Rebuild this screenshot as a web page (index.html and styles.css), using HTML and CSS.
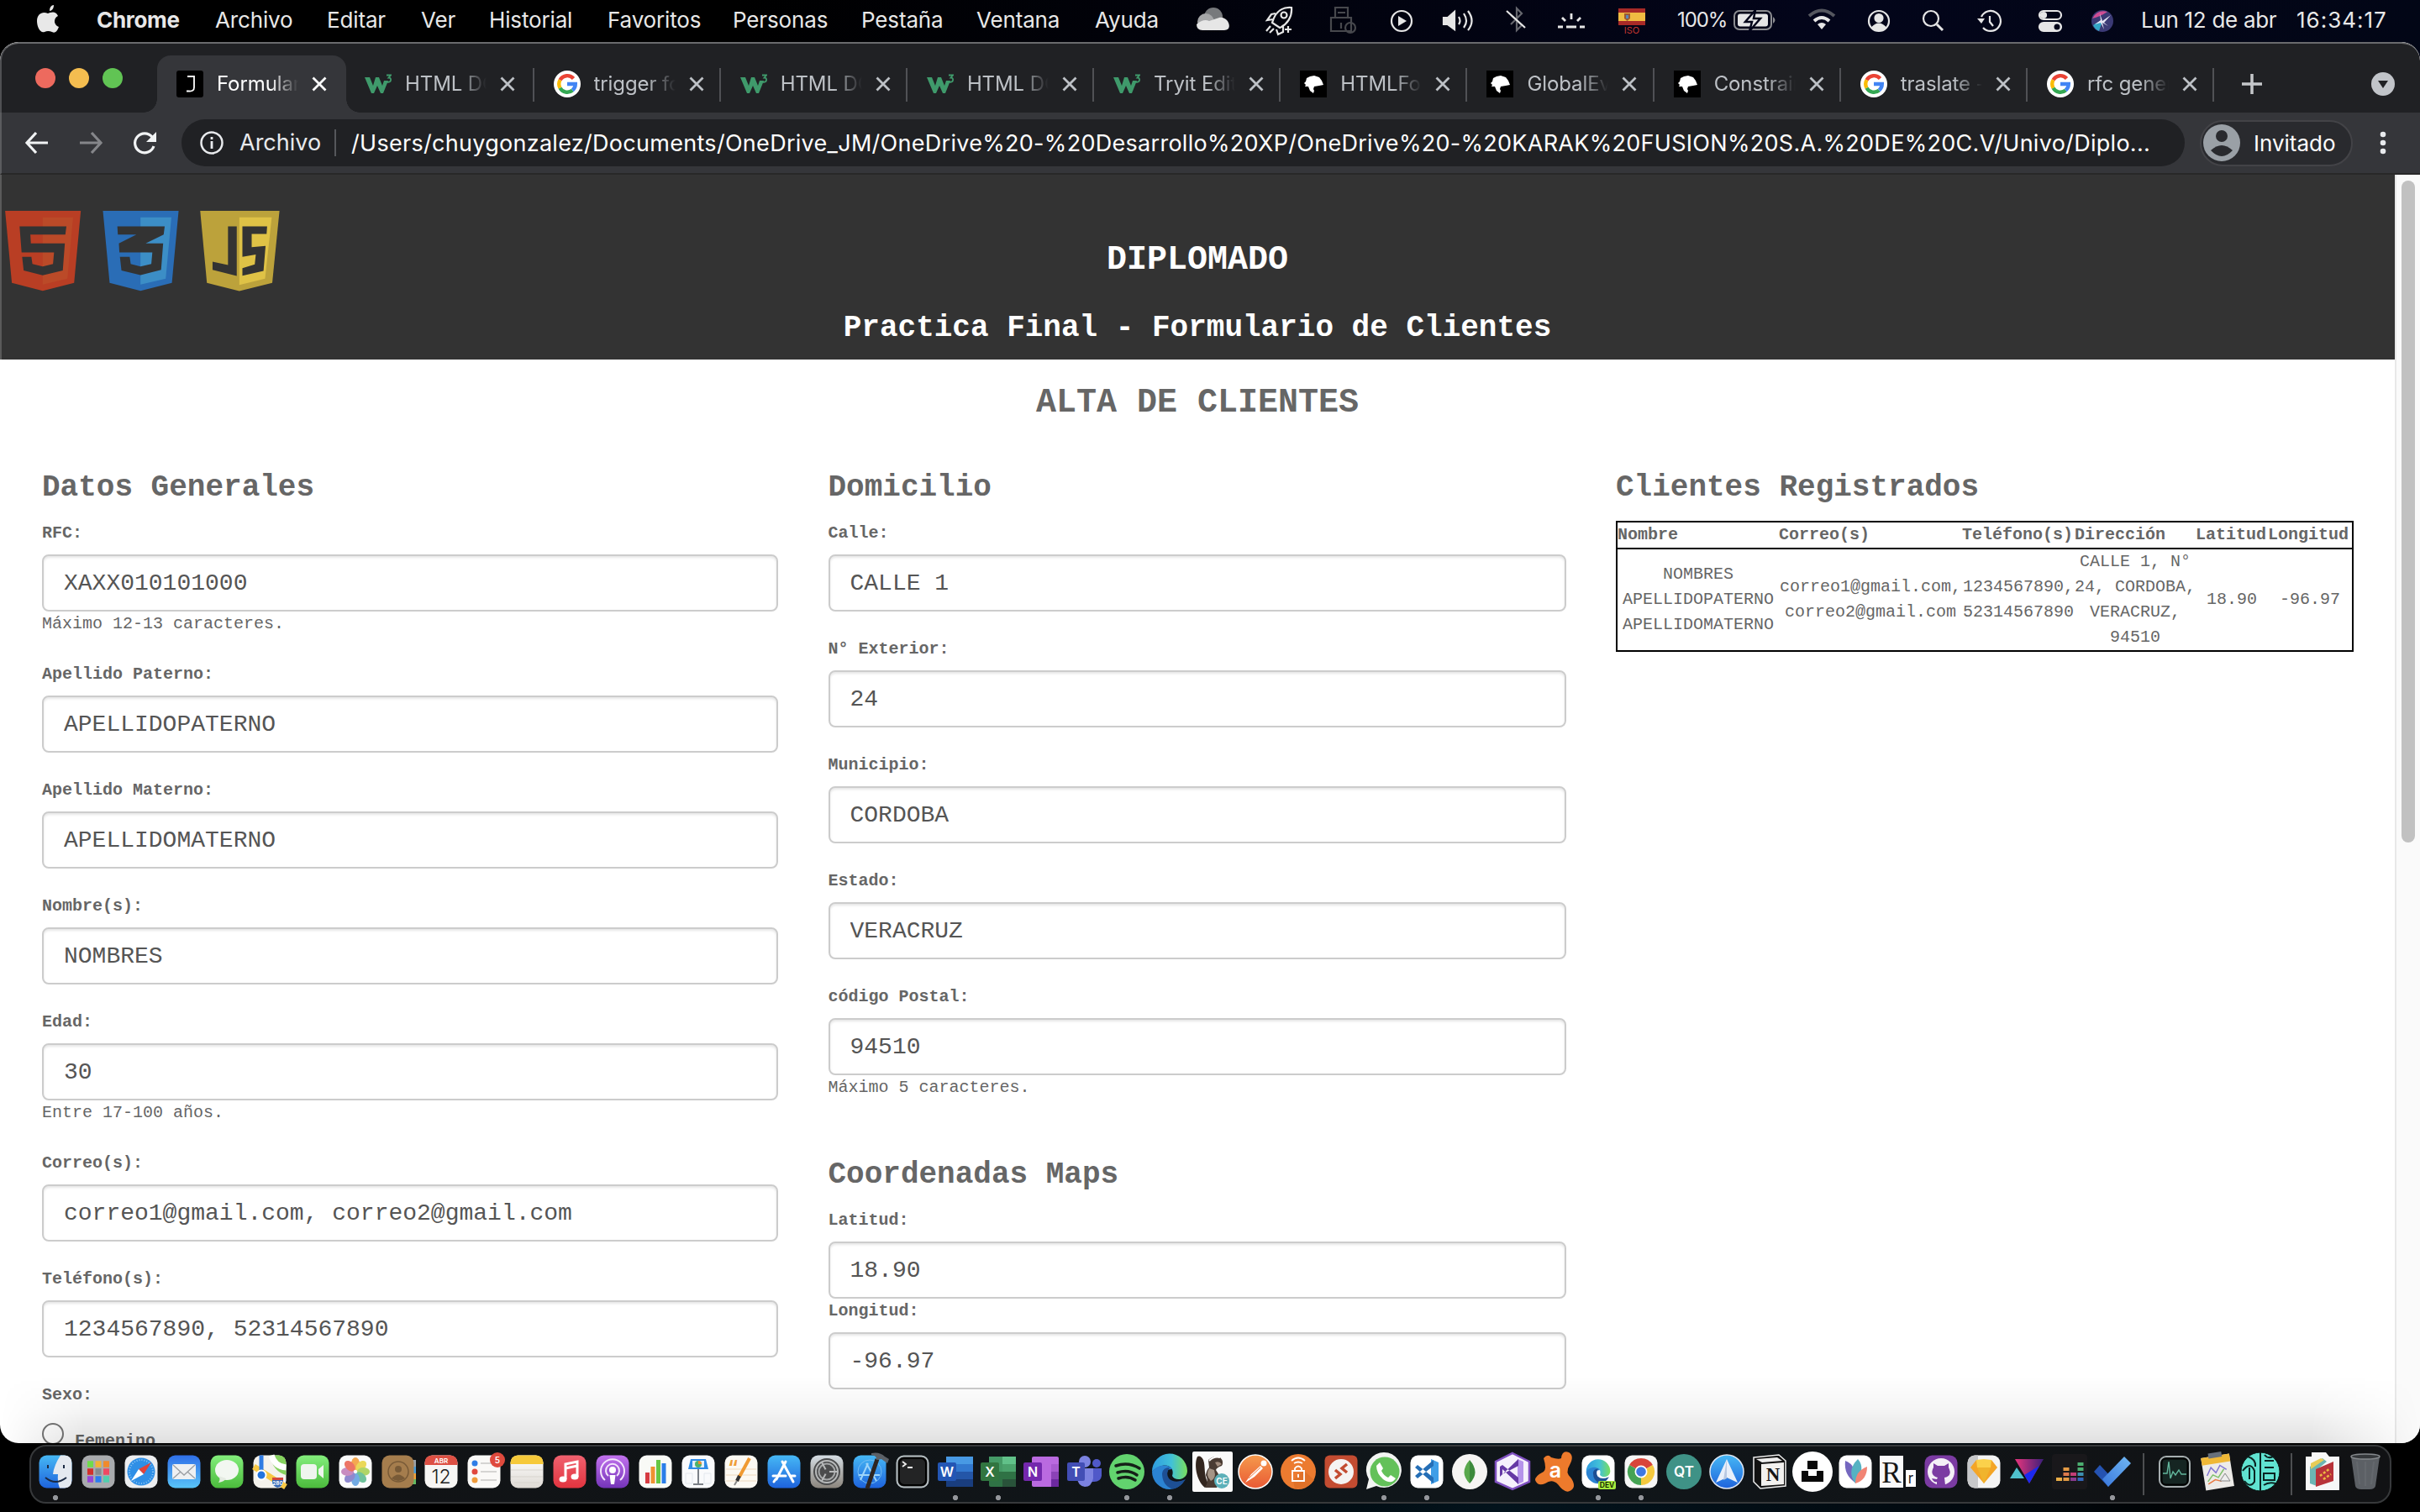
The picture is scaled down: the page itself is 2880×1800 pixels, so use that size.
FILE: index.html
```html
<!DOCTYPE html>
<html lang="es">
<head>
<meta charset="utf-8">
<title>Formulario de Clientes</title>
<link rel="stylesheet" href="styles.css">
</head>
<body>
<svg class="defs" width="0" height="0">
  <defs>
    <symbol id="close" viewBox="0 0 18 18"><path d="M1.500 1.500L16.500 16.500M16.500 1.500L1.500 16.500" stroke="currentColor" stroke-width="2.800" fill="none"/></symbol>
    <symbol id="w3" viewBox="0 0 32 32"><path d="M0 8h6l4 10 3-10h4l4 10 2-6h5l-6 15h-3l-4-9-4 9H8z" fill="#3f9a6b"/><path d="M26 5.500h5l-2.500 3q3 0 2.500 3t-5 2" fill="none" stroke="#3f9a6b" stroke-width="1.800"/></symbol>
    <symbol id="google" viewBox="0 0 32 32"><circle cx="16" cy="16" r="16" fill="#fff"/><g fill="none" stroke-width="4.400"><path d="M23.500 9.500A9.800 9.800 0 0 0 7.500 11.300" stroke="#ea4335"/><path d="M7.500 11.300a9.800 9.800 0 0 0 0 9.400" stroke="#fbbc05"/><path d="M7.500 20.700a9.800 9.800 0 0 0 14.800 2.800" stroke="#34a853"/><path d="M22.300 23.500A9.800 9.800 0 0 0 25.800 16H16" stroke="#4285f4"/></g></symbol>
    <symbol id="mdn" viewBox="0 0 32 32"><path d="M0 0h32v32H0z" fill="#000"/><path d="M8 9l4-2 5-1 6 2 3 4 2 5-5 1-6 1-1 3 1 2-1 3-4-3-2-5-4 0 1-2-2-2 2-2z" fill="#fff"/></symbol>
    <linearGradient id="blue" x2="0" y2="1"><stop stop-color="#46b8f5"/><stop offset="1" stop-color="#1e63dc"/></linearGradient>
    <linearGradient id="mailg" x2="0" y2="1"><stop stop-color="#2f6fe8"/><stop offset="1" stop-color="#59c4f8"/></linearGradient>
    <linearGradient id="green" x2="0" y2="1"><stop stop-color="#83ee7c"/><stop offset="1" stop-color="#4bbb3c"/></linearGradient>
    <linearGradient id="red" x2="0" y2="1"><stop stop-color="#f0616f"/><stop offset="1" stop-color="#e2343f"/></linearGradient>
    <linearGradient id="purple" x2="0" y2="1"><stop stop-color="#c272ee"/><stop offset="1" stop-color="#7434b8"/></linearGradient>
    <linearGradient id="orange" x2="0" y2="1"><stop stop-color="#f59a4c"/><stop offset="1" stop-color="#ea5a35"/></linearGradient>
    <linearGradient id="silver" x2="0" y2="1"><stop stop-color="#d5dde3"/><stop offset="1" stop-color="#8b857d"/></linearGradient>
    <linearGradient id="paper" x2="0" y2="1"><stop stop-color="#fff"/><stop offset="1" stop-color="#dedad4"/></linearGradient>
    <linearGradient id="edgeg"><stop stop-color="#2e9be0"/><stop offset=".55" stop-color="#41c1d8"/><stop offset="1" stop-color="#79df5c"/></linearGradient>
    <linearGradient id="tri"><stop stop-color="#e8357c"/><stop offset="1" stop-color="#3b1f7a"/></linearGradient>
    <linearGradient id="todo" x1="0" y1="1" x2="1" y2="0"><stop stop-color="#3a78dc"/><stop offset="1" stop-color="#70b8f4"/></linearGradient>
    <symbol id="edge" viewBox="-22 -22 44 44"><path d="M-21 0A21 21 0 0 1 21 -1C21 10 6 12 3 5C7 -6 -6 -14 -21 0Z" fill="url(#edgeg)"/><path d="M-21 0C-14-10 0-9 3-3Q-7-3-5 6Q-1 17 18 10Q11 21 0 21A21 21 0 0 1-21 0Z" fill="#2b83d2"/><path d="M-9 2Q-8-5 0-5Q-5 2-1 8Q6 15 19 9Q12 20 3 20.500Q-9 16-9 2Z" fill="#1d4f94"/></symbol>
  </defs>
</svg>

<header class="menubar">
  <svg class="ico" viewBox="-22 -25 44 50"><path d="M2-12C2-16 4-19 7-19C7-15 5-12 2-12ZM0-9C3-10 9-13 12-6C6-3 7 5 13 7C10 15 7 14 5 13Q0 11-4 13C-9 15-13 7-13 0C-13-9-6-12 0-9Z" fill="#e8e8e8"/></svg>
  <span class="app">Chrome</span><span>Archivo</span><span>Editar</span><span>Ver</span><span>Historial</span><span>Favoritos</span><span>Personas</span><span>Pestaña</span><span>Ventana</span><span>Ayuda</span>
  <svg class="ico" viewBox="-22 -25 44 50"><circle cy="-5" r="11" fill="#77797c"/><circle cx="-9" cy="1" r="10" fill="#a5a6a8"/><path d="M-20 4Q-12-3-5 0L7-4C18-6 24 11 13 11H-13Q-20 11-20 4Z" fill="#e6e6e6"/></svg>
  <svg class="ico line" viewBox="-22 -25 44 50"><path d="M-9 2C-5-12 4-17 14-16C15-5 9 4 0 8ZM-8-2l-7 1 5-7 5-1M4 6l0 7-6 3-2-6M-11 6l-5 6M-7 9l-5 5M-2 12M6 10h8M10 6v8"/><circle cx="5" cy="-7" r="3.500"/></svg>
  <svg class="ico line dim" viewBox="-22 -25 44 50"><path d="M-9-16H6V-4H-9zM-14-4H10V12H-14zM-6-10H3M-2 2v7"/><circle cx="9" cy="8" r="6"/></svg>
  <svg class="ico line" viewBox="-22 -25 44 50"><circle r="12"/><path d="M-4-6L6 0L-4 6Z" fill="#e6e6e6" stroke="none"/></svg>
  <svg class="ico line" viewBox="-22 -25 44 50"><path d="M-18-4h5l8-7V10l-8-6h-5z" fill="#e6e6e6"/><path d="M0-5q3 5 0 9M6-9q6 9 0 17M11-12q9 12 0 23"/></svg>
  <svg class="ico line" viewBox="-22 -25 44 50"><path class="faint" d="M-6-7L7 5L1 11V-15L7-9L-6 4"/><path d="M-11-12L11 8"/></svg>
  <svg class="ico line" viewBox="-22 -25 44 50"><path stroke-width="2.800" d="M-16 7h6M-6 7h12M10 7h6M0-2v-7M-7 0l-4-4M7 0l4-4"/></svg>
  <svg class="ico" viewBox="-22 -25 44 50"><path d="M-16-15H16V5H-16z" fill="#a82a27"/><path d="M-16-10H16V0H-16z" fill="#f0bc42"/><path d="M-9-9h7v6l-3.500 3L-9-3z" fill="#9c5a33"/><path d="M-7-7h3v4h-3z" fill="#5c86b8"/><text x="0" y="15" class="iso">ISO</text></svg>
  <span class="pct">100%</span>
  <svg class="ico batt" viewBox="-28 -25 56 50"><rect x="-24" y="-12" width="44" height="22" rx="6" fill="none" stroke="#8b8c90" stroke-width="2"/><path d="M22-5q5 4 0 8z" fill="#8b8c90"/><rect x="-20" y="-8.500" width="36" height="15" rx="3" fill="#e6e6e6"/><path d="M1-13L-11 1H-3L-6 12L7-3H-1Z" fill="#e6e6e6" stroke="#03051a" stroke-width="2.500"/></svg>
  <svg class="ico" viewBox="-22 -25 44 50"><path d="M-15-6Q0-19 15-6" fill="none" stroke="#55575f" stroke-width="4"/><path d="M-9 0Q0-8 9 0" fill="none" stroke="#e6e6e6" stroke-width="4"/><path d="M-5 4Q0 0 5 4L0 10Z" fill="#e6e6e6"/></svg>
  <svg class="ico line" viewBox="-22 -25 44 50"><circle r="12"/><circle cy="-3.500" r="4.500" fill="#e6e6e6"/><path d="M-8 8Q0-1 8 8Q0 14-8 8" fill="#e6e6e6"/></svg>
  <svg class="ico line" viewBox="-22 -25 44 50"><circle cx="-2" cy="-3" r="9"/><path d="M5 4l7 7" stroke-width="3"/></svg>
  <svg class="ico line" viewBox="-22 -25 44 50"><path d="M-10-5A12 12 0 1 1-8 8M0-6v7l4 5"/><path d="M-15-3h9l-4 6z" fill="#e6e6e6" stroke="none"/></svg>
  <svg class="ico line" viewBox="-22 -25 44 50"><rect x="-13" y="-12" width="26" height="10" rx="5"/><circle cx="-8" cy="-7" r="3" fill="#e6e6e6"/><rect x="-13" y="2" width="26" height="10" rx="5" fill="#e6e6e6"/><circle cx="8" cy="7" r="3.500" fill="#03051a" stroke="none"/></svg>
  <svg class="ico" viewBox="-22 -25 44 50"><circle r="13" fill="#3b3a75"/><path d="M-12-3Q-6-14 6-11Q-3-5-12-3Z" fill="#cf4d93"/><path d="M-11 5Q-4 0 0 0L-4 12Q-9 10-11 5Z" fill="#33a6c5"/><path d="M0 0L10-7L2 2L7 6L0 2L2 10L-2 2L-9 4L-2-1L-3-9Z" fill="#e7e6f5"/></svg>
  <span class="date">Lun 12 de abr</span><span class="clock">16:34:17</span>
</header>

<div class="window">
  <div class="tabstrip">
    <div class="lights"><i class="l-red"></i><i class="l-yellow"></i><i class="l-green"></i></div>
    <div class="tab active"><svg class="fav" viewBox="0 0 32 32"><rect width="32" height="32" rx="3"/><path d="M13 7h8v13q0 5-6 4.500h-3" stroke="#fff" stroke-width="1.800" fill="none"/></svg><span>Formulario</span><svg class="x"><use href="#close"/></svg></div>
    <div class="tab nosep"><svg class="fav"><use href="#w3"/></svg><span>HTML DOM</span><svg class="x"><use href="#close"/></svg></div>
    <div class="tab"><svg class="fav"><use href="#google"/></svg><span>trigger form</span><svg class="x"><use href="#close"/></svg></div>
    <div class="tab"><svg class="fav"><use href="#w3"/></svg><span>HTML DOM</span><svg class="x"><use href="#close"/></svg></div>
    <div class="tab"><svg class="fav"><use href="#w3"/></svg><span>HTML DOM</span><svg class="x"><use href="#close"/></svg></div>
    <div class="tab"><svg class="fav"><use href="#w3"/></svg><span>Tryit Editor</span><svg class="x"><use href="#close"/></svg></div>
    <div class="tab"><svg class="fav"><use href="#mdn"/></svg><span>HTMLForm</span><svg class="x"><use href="#close"/></svg></div>
    <div class="tab"><svg class="fav"><use href="#mdn"/></svg><span>GlobalEvent</span><svg class="x"><use href="#close"/></svg></div>
    <div class="tab"><svg class="fav"><use href="#mdn"/></svg><span>Constraint</span><svg class="x"><use href="#close"/></svg></div>
    <div class="tab"><svg class="fav"><use href="#google"/></svg><span>traslate - G</span><svg class="x"><use href="#close"/></svg></div>
    <div class="tab"><svg class="fav"><use href="#google"/></svg><span>rfc generator</span><svg class="x"><use href="#close"/></svg></div>
    <svg class="plus" viewBox="0 0 24 24"><path d="M12 0v24M0 12h24" stroke="#c5c7ca" stroke-width="3.500"/></svg>
    <svg class="more" viewBox="0 0 28 28"><circle cx="14" cy="14" r="14" fill="#c1c4c9"/><path d="M8 10h12l-6 9z" fill="#202124"/></svg>
  </div>
  <div class="toolbar">
    <svg class="nav" viewBox="-32 -32 64 64"><path d="M13 0H-11M-1-12L-12 0L-1 12" stroke="#f1f3f4" stroke-width="3.200" fill="none"/></svg>
    <svg class="nav" viewBox="-32 -32 64 64"><path d="M-13 0H11M1-12L12 0L1 12" stroke="#85868a" stroke-width="3.200" fill="none"/></svg>
    <svg class="nav" viewBox="-32 -32 64 64"><path d="M9-7A11.500 11.500 0 1 0 11 4" stroke="#f1f3f4" stroke-width="3.200" fill="none"/><path d="M14-13V-1H2Z" fill="#f1f3f4"/></svg>
    <div class="omnibox">
      <svg class="info" viewBox="-14 -14 28 28"><circle r="12.500" fill="none" stroke="#e8eaed" stroke-width="2.500"/><path d="M0-7v3M0-2v9" stroke="#e8eaed" stroke-width="2.800"/></svg>
      <span class="scheme">Archivo</span><span class="url">/Users/chuygonzalez/Documents/OneDrive_JM/OneDrive%20-%20Desarrollo%20XP/OneDrive%20-%20KARAK%20FUSION%20S.A.%20DE%20C.V/Univo/Diplo...</span>
    </div>
    <div class="profile"><svg viewBox="-22 -22 44 44"><circle r="22" fill="#9aa0a6"/><circle cy="-8" r="7" fill="#292a2e"/><path d="M-13 9Q0-3 13 9Q0 23-13 9" fill="#292a2e"/></svg><span>Invitado</span></div>
    <svg class="kebab" viewBox="0 0 8 28"><g fill="#e8eaed"><circle cx="4" cy="4" r="3.300"/><circle cx="4" cy="14" r="3.300"/><circle cx="4" cy="24" r="3.300"/></g></svg>
  </div>

  <div class="viewport">
    <main class="page">
      <section class="banner">
        <svg class="logos" viewBox="0 90 560 250" preserveAspectRatio="none">
          <path d="M10 100H157L144 310L83 333L23 310Z" fill="#b93e24"/><path d="M83 119H142L131 298L83 315Z" fill="#bb4a28"/>
          <path d="M38 145H129L127 169H59L60 195H126L122 274L83 288L46 274L43 234H61L63 255L83 262L103 255L105 221H42Z" fill="#333"/>
          <path d="M200 100H347L334 310L273 333L213 310Z" fill="#2a6db6"/><path d="M273 119H333L322 298L273 315Z" fill="#3c8ec6"/>
          <path d="M228 145H320L318 169L283 195H317L313 272L273 287L236 274L233 234H252L254 255L273 262L294 255L296 221H232L231 195L265 169H229Z" fill="#333"/>
          <path d="M389 100H543L529 310L465 334L402 310Z" fill="#bca23b"/><path d="M465 119H528L515 298L465 316Z" fill="#dfc246"/>
          <path d="M443 145H460V290L413 272V248L443 258ZM471 145H519L518 167H489V206L516 202L512 275L471 289V267L495 256L497 227L471 234Z" fill="#333"/>
        </svg>
        <div class="banner-text"><h1>DIPLOMADO</h1><h2>Practica Final - Formulario de Clientes</h2></div>
      </section>
      <h1 class="title">ALTA DE CLIENTES</h1>
      <div class="columns">
        <form class="col">
          <h2>Datos Generales</h2>
          <div class="field"><label>RFC:</label><input value="XAXX010101000"><small>Máximo 12-13 caracteres.</small></div>
          <div class="field"><label>Apellido Paterno:</label><input value="APELLIDOPATERNO"></div>
          <div class="field"><label>Apellido Materno:</label><input value="APELLIDOMATERNO"></div>
          <div class="field"><label>Nombre(s):</label><input value="NOMBRES"></div>
          <div class="field"><label>Edad:</label><input value="30"><small>Entre 17-100 años.</small></div>
          <div class="field"><label>Correo(s):</label><input value="correo1@gmail.com, correo2@gmail.com"></div>
          <div class="field"><label>Teléfono(s):</label><input value="1234567890, 52314567890"></div>
          <div class="field"><label>Sexo:</label><div class="radio"><i></i><b>Femenino</b></div></div>
        </form>
        <form class="col">
          <h2>Domicilio</h2>
          <div class="field"><label>Calle:</label><input value="CALLE 1"></div>
          <div class="field"><label>N° Exterior:</label><input value="24"></div>
          <div class="field"><label>Municipio:</label><input value="CORDOBA"></div>
          <div class="field"><label>Estado:</label><input value="VERACRUZ"></div>
          <div class="field"><label>código Postal:</label><input value="94510"><small>Máximo 5 caracteres.</small></div>
          <h2 class="maps">Coordenadas Maps</h2>
          <div class="field tight"><label>Latitud:</label><input value="18.90"></div>
          <div class="field tight"><label>Longitud:</label><input value="-96.97"></div>
        </form>
        <section class="col">
          <h2>Clientes Registrados</h2>
          <table>
            <colgroup><col class="c1"><col class="c2"><col class="c3"><col class="c4"><col class="c5"><col class="c6"></colgroup>
            <thead><tr><th>Nombre</th><th>Correo(s)</th><th>Teléfono(s)</th><th>Dirección</th><th>Latitud</th><th>Longitud</th></tr></thead>
            <tbody><tr><td>NOMBRES<br>APELLIDOPATERNO<br>APELLIDOMATERNO</td><td>correo1@gmail.com,<br>correo2@gmail.com</td><td>1234567890,<br>52314567890</td><td>CALLE 1, N°<br>24, CORDOBA,<br>VERACRUZ,<br>94510</td><td>18.90</td><td>-96.97</td></tr></tbody>
          </table>
        </section>
      </div>
    </main>
    <div class="scroll"><i></i></div>
    <div class="shade"></div>
  </div>
</div>

<nav class="dock">
  <svg class="on" viewBox="-25 -25 50 50"><rect x="-19.500" y="-19.500" width="39" height="39" rx="9" fill="url(#blue)"/><path d="M6-19.500Q-2-7-3 3H3Q2 12 5 19.500H11Q19.500 19 19.500 10V-10Q19.500-19 11-19.500Z" fill="#e4e9f0"/><path d="M-9-8v4M10-8v4M-12 7Q0 17 13 7" stroke="#1b2a44" stroke-width="2" fill="none"/></svg>
  <svg viewBox="-25 -25 50 50"><rect x="-19.500" y="-19.500" width="39" height="39" rx="9" fill="#a9abae"/><g stroke-width="7.500"><path d="M-13-9h7" stroke="#6fdc4a"/><path d="M-3.500-9h7" stroke="#f2b234"/><path d="M6-9h7" stroke="#f08a2c"/><path d="M-13 0h7" stroke="#d3302b"/><path d="M-3.500 0h7" stroke="#858a90"/><path d="M6 0h7" stroke="#ef4862"/><path d="M-13 9h7" stroke="#9747d6"/><path d="M-3.500 9h7" stroke="#2b7cf0"/><path d="M6 9h7" stroke="#51cfae"/></g></svg>
  <svg viewBox="-25 -25 50 50"><rect x="-19.500" y="-19.500" width="39" height="39" rx="9" fill="#ecedef"/><circle r="16.500" fill="#2f8fe6"/><circle r="14" fill="none" stroke="#8cc6f5" stroke-width="2" stroke-dasharray="1 2"/><path d="M12-11L3 3L-3-3Z" fill="#e2423a"/><path d="M-12 11L-3-3L3 3Z" fill="#fff"/></svg>
  <svg viewBox="-25 -25 50 50"><rect x="-19.500" y="-19.500" width="39" height="39" rx="9" fill="url(#mailg)"/><rect x="-14" y="-9" width="28" height="18" rx="2" fill="#eef0f2"/><path d="M-13-8L0 4L13-8M-13 8L-4 0M13 8L4 0" stroke="#9a9ea3" stroke-width="1.300" fill="none"/></svg>
  <svg viewBox="-25 -25 50 50"><rect x="-19.500" y="-19.500" width="39" height="39" rx="9" fill="url(#green)"/><ellipse cy="-2" rx="14" ry="12" fill="#f2f7f1"/><path d="M-10 5Q-7 9-10 13Q-3 12-1 8" fill="#e4ebe2"/></svg>
  <svg viewBox="-25 -25 50 50"><rect x="-19.500" y="-19.500" width="39" height="39" rx="9" fill="#f4f2ec"/><path d="M0-19.500H11Q19.500-19 19.500-10V4Q4 0 0-19.500Z" fill="#85d25e"/><path d="M2-19.500Q6-6 19.500-5" stroke="#fff" stroke-width="7" fill="none"/><path d="M-19-6L19 18" stroke="#f7c844" stroke-width="7"/><path d="M-10-19.500V5" stroke="#2f7be2" stroke-width="5"/><circle cx="-10" cy="4" r="5.500" fill="#2374de" stroke="#fff" stroke-width="2"/><path d="M3 7h13v5q-1 6-7 7q-6-2-6-7z" fill="#3569b4"/><path d="M3 7h13v3H3z" fill="#d4453d"/><text x="9.500" y="16" class="t" font-size="6.500">280</text></svg>
  <svg viewBox="-25 -25 50 50"><rect x="-19.500" y="-19.500" width="39" height="39" rx="9" fill="url(#green)"/><rect x="-14" y="-9" width="19" height="18" rx="4" fill="#eff5ee"/><path d="M7-3L13-8V8L7 3Z" fill="#eff5ee"/></svg>
  <svg viewBox="-25 -25 50 50"><rect x="-19.500" y="-19.500" width="39" height="39" rx="9" fill="#fbfbfb"/><g opacity=".85"><ellipse cy="-9.500" rx="5" ry="7.500" fill="#f39a33"/><ellipse cy="-9.500" rx="5" ry="7.500" fill="#e8d33c" transform="rotate(45)"/><ellipse cy="-9.500" rx="5" ry="7.500" fill="#a3cf4e" transform="rotate(90)"/><ellipse cy="-9.500" rx="5" ry="7.500" fill="#57b98c" transform="rotate(135)"/><ellipse cy="-9.500" rx="5" ry="7.500" fill="#5c9ee0" transform="rotate(180)"/><ellipse cy="-9.500" rx="5" ry="7.500" fill="#7d76c8" transform="rotate(225)"/><ellipse cy="-9.500" rx="5" ry="7.500" fill="#c079b6" transform="rotate(270)"/><ellipse cy="-9.500" rx="5" ry="7.500" fill="#ea5d4b" transform="rotate(315)"/></g></svg>
  <svg viewBox="-25 -25 50 50"><path d="M17-14h4v8h-4z" fill="#9aa1a8"/><path d="M17-6h4v8h-4z" fill="#4a9bd6"/><path d="M17 2h4v7h-4z" fill="#f0a13a"/><path d="M17 9h4v6h-4z" fill="#63bb62"/><rect x="-19.500" y="-19.500" width="38" height="39" rx="9" fill="#a57d4d"/><g fill="none" stroke="#785a37" stroke-width="1.500"><circle r="12"/></g><circle cy="-3" r="4" fill="#785a37"/><path d="M-8 8Q0-1 8 8Q0 14-8 8" fill="#785a37"/></svg>
  <svg viewBox="-25 -25 50 50"><rect x="-19.500" y="-19.500" width="39" height="39" rx="9" fill="#f7f6f4"/><path d="M-19.500-8V-11Q-19-19-11-19.500H11Q19-19 19.500-11V-8Z" fill="#dd5044"/><text y="-10.500" class="t" font-size="8">ABR</text><text y="13.500" class="t day" font-size="23">12</text></svg>
  <svg viewBox="-25 -25 50 50"><rect x="-19.500" y="-19.500" width="39" height="39" rx="9" fill="#faf9f7"/><path d="M-4-10H10M-4 0H15M-4 10H15" stroke="#c9c8c6" stroke-width="1.500"/><circle cx="-11" cy="-10" r="3.500" fill="#2f7de6"/><circle cx="-11" r="3.500" fill="#e0483e"/><circle cx="-11" cy="10" r="3.500" fill="#ef9b3b"/><circle cx="16" cy="-14" r="9" fill="#df4a3d"/><text x="16" y="-10" class="t" font-size="10">5</text></svg>
  <svg viewBox="-25 -25 50 50"><rect x="-19.500" y="-19.500" width="39" height="39" rx="9" fill="url(#paper)"/><path d="M-19.500-9V-11Q-19-19-11-19.500H11Q19-19 19.500-11V-9Z" fill="#f6c93a"/><path d="M-19-2H19M-19 6H19M-15 13H15" stroke="#d9d5cf"/></svg>
  <svg viewBox="-25 -25 50 50"><rect x="-19.500" y="-19.500" width="39" height="39" rx="9" fill="url(#red)"/><path d="M-5 9V-9L9-12V6M-5-4L9-7" stroke="#fff" stroke-width="3" fill="none"/><ellipse cx="-8" cy="9" rx="4.500" ry="3.500" fill="#fff"/><ellipse cx="6" cy="6" rx="4.500" ry="3.500" fill="#fff"/></svg>
  <svg viewBox="-25 -25 50 50"><rect x="-19.500" y="-19.500" width="39" height="39" rx="9" fill="url(#purple)"/><g fill="none" stroke="#f3e5fb" stroke-width="2"><path d="M-9 10A14 14 0 1 1 9 10M-5 5A8 8 0 1 1 5 5"/></g><circle cy="-2" r="4" fill="#fff"/><path d="M-3.500 4h7L2 15h-4z" fill="#fff"/></svg>
  <svg viewBox="-25 -25 50 50"><rect x="-19.500" y="-19.500" width="39" height="39" rx="9" fill="#f9faf6"/><path d="M-12 1h5v13h-5z" fill="#d63c42"/><path d="M-5.500-6h5v20h-5z" fill="#ef9232"/><path d="M1-14h5v28H1z" fill="#67c744"/><path d="M7.500-10h5v24h-5z" fill="#2a7ee8"/></svg>
  <svg viewBox="-25 -25 50 50"><rect x="-19.500" y="-19.500" width="39" height="39" rx="9" fill="#f9fafc"/><path d="M-15 2h8v12h-8zM7 2h8v12H7z" fill="none" stroke="#e3e8ee"/><path d="M-9-15H9L12-3H-12Z" fill="#2f8ce8"/><rect x="-7" y="-13" width="14" height="8" fill="#e6eff8"/><circle cy="-9" r="4" fill="#4fb26a"/><path d="M0-13A4 4 0 0 1 4-9H0Z" fill="#ef8c35"/><path d="M0-3V15M-6 15H6" stroke="#7b8087" stroke-width="2"/></svg>
  <svg viewBox="-25 -25 50 50"><rect x="-19.500" y="-19.500" width="39" height="39" rx="9" fill="#fcf9f3"/><path d="M-18-3H18M-18 4H18M-18 11H18" stroke="#efd9bd"/><text x="-10" y="4" class="t quote" font-size="24">“</text><path d="M10-16L-2 6" stroke="#f09a32" stroke-width="4"/><path d="M-2 5L-5 11" stroke="#333" stroke-width="4"/><path d="M-5 11L-8 16" stroke="#888" stroke-width="2"/></svg>
  <svg viewBox="-25 -25 50 50"><rect x="-19.500" y="-19.500" width="39" height="39" rx="9" fill="url(#blue)"/><path d="M2-12L-9 9M-2-12L11 12M-13 5H2M8 5H13M-10 9L-12 12" stroke="#fff" stroke-width="3" fill="none" stroke-linecap="round"/></svg>
  <svg viewBox="-25 -25 50 50"><rect x="-19.500" y="-19.500" width="39" height="39" rx="9" fill="url(#silver)"/><circle r="16" fill="#4b4c4d"/><circle r="13" fill="none" stroke="#b7b9ba" stroke-width="2"/><circle r="9.500" fill="none" stroke="#a5a7a8" stroke-width="2"/><path d="M0 0L-6-11M0 0H13M0 0L-6 11" stroke="#b7b9ba" stroke-width="2"/><circle r="3" fill="#4b4c4d"/></svg>
  <svg viewBox="-25 -25 50 50"><rect x="-19.500" y="-19.500" width="39" height="39" rx="9" fill="url(#blue)"/><circle r="14" fill="none" stroke="#74bdf3"/><path d="M-2-10L-11 10M-4-10L8 11M-13 4H12" stroke="#9dd5fa" stroke-width="2"/><path d="M9-15L-3 20" stroke="#2d2522" stroke-width="5"/><path d="M2-22Q12-24 18-18L23-15L21-10L14-15L8-14Q9-19 2-20Z" fill="#5c6167"/></svg>
  <svg viewBox="-25 -25 50 50"><rect x="-18.500" y="-18.500" width="37" height="37" rx="8" fill="#232425" stroke="#b7c0c4" stroke-width="2"/><rect x="-16" y="-16" width="32" height="32" rx="6" fill="none" stroke="#000" stroke-width="2"/><path d="M-12-12L-8-9L-12-6M-6-5h6" stroke="#eee" stroke-width="1.800" fill="none"/></svg>
  <svg class="on" viewBox="-25 -25 50 50"><rect x="-11" y="-18" width="32" height="36" rx="2" fill="#2456a8"/><path d="M-11-18H21V-9H-11z" fill="#4899e4"/><path d="M-11-9H21V0H-11z" fill="#3278cf"/><path d="M-11 9H21V18H-11z" fill="#193d7e"/><rect x="-21" y="-11" width="22" height="22" rx="2" fill="#2356b4"/><text x="-10" y="6" class="t" font-size="16">W</text></svg>
  <svg class="on" viewBox="-25 -25 50 50"><rect x="-11" y="-18" width="32" height="36" rx="2" fill="#2f7245"/><path d="M-11-18H5V0H-11z" fill="#459a66"/><path d="M5-18H21V-9H5z" fill="#61c189"/><path d="M5-9H21V0H5z" fill="#4ba26c"/><path d="M5 9H21V18H5z" fill="#29533a"/><rect x="-21" y="-11" width="22" height="22" rx="2" fill="#317540"/><text x="-10" y="6" class="t" font-size="16">X</text></svg>
  <svg viewBox="-25 -25 50 50"><rect x="-11" y="-18" width="32" height="36" rx="2" fill="#ba6ae0"/><path d="M12-9H21V0H12z" fill="#a85bd0"/><path d="M12 0H21V9H12z" fill="#8b42b7"/><path d="M12 9H21V18H12z" fill="#6d29a0"/><rect x="-21" y="-11" width="22" height="22" rx="2" fill="#7428ad"/><text x="-10" y="6" class="t" font-size="16">N</text></svg>
  <svg viewBox="-25 -25 50 50"><circle cx="1" cy="-12" r="7" fill="#7b82e0"/><circle cx="15" cy="-10" r="5" fill="#5059c9"/><path d="M9-4H21V5Q20 12 12 12H9Z" fill="#5059c9"/><path d="M-8-4H11V8Q9 18 1 18Q-7 17-8 8Z" fill="#7b82e0"/><rect x="-20" y="-11" width="21" height="22" rx="2" fill="#424eb5"/><text x="-9.500" y="6" class="t" font-size="16">T</text></svg>
  <svg class="on" viewBox="-25 -25 50 50"><circle r="21" fill="#62d36e"/><path d="M-13-7Q2-12 15-4M-11 1Q2-3 12 4M-10 8Q1 4 10 10" stroke="#152018" stroke-width="3.500" fill="none" stroke-linecap="round"/></svg>
  <svg class="on" viewBox="-25 -25 50 50"><use href="#edge" x="-22" y="-22" width="44" height="44"/></svg>
  <svg viewBox="-25 -25 50 50"><rect x="-24" y="-24" width="48" height="48" rx="2" fill="#fafafa"/><path d="M-18-18C-22-10-20 10-9 19L-5 14C-11 4-8-6-11-14Q-14-20-18-18Z" fill="#33261f"/><path d="M-5-14Q2-20 9-17Q14-12 11-7Q5-5 4-2Q10 6 9 14L5 19H-9Q-4 12-8 4Q-7-2-4-5Z" fill="#4a3b33"/><path d="M-4-4Q-9 4-2 11Q5 8 2-2Z" fill="#a59486"/><path d="M-4-13Q2-19 9-17" stroke="#fff" stroke-width="2" fill="none"/><path d="M3-11Q8-13 11-9L6-6Z" fill="#a08a7c"/><circle cx="11" cy="11" r="9" fill="#5cb0b9"/><text x="11" y="15" class="t" font-size="10">CE</text></svg>
  <svg viewBox="-25 -25 50 50"><circle r="20" fill="url(#orange)" stroke="#fff" stroke-width="1.500"/><path d="M-12 13L-5 3L6-7L9-4L-1 6Z" fill="#fff"/><path d="M-8 8L6-5" stroke="#ee7a46"/><circle cx="10" cy="-10" r="3.500" fill="#fff"/></svg>
  <svg viewBox="-25 -25 50 50"><circle r="21" fill="#ec7b30"/><path d="M6-2L19 10Q12 21-4 20L-6 11Z" fill="#e07128"/><path d="M-7-1H7V11H-7zM-4-1V-4Q0-9 4-4V-1M0 3V7M-5-10Q0-13 5-10M-8-13Q0-20 8-13" fill="none" stroke="#fff" stroke-width="1.800"/></svg>
  <svg viewBox="-25 -25 50 50"><rect x="-19.500" y="-19.500" width="39" height="39" rx="6" fill="#c34c31"/><circle r="15" fill="#f5f3f2"/><path d="M-7-2L-1 3L-7 8M7-9L1-4L7 1" stroke="#c34c31" stroke-width="3.500" fill="none"/></svg>
  <svg class="on" viewBox="-25 -25 50 50"><path d="M-21 21L-18 9A21 21 0 1 1-9 17Z" fill="#f2f4f2"/><circle cx="1" r="17.500" fill="#63c15a"/><path d="M-9-7L-5-11L-1-4L-3-1Q0 5 5 7L8 4L14 8Q9 16-1 9Q-9 2-9-7Z" fill="#fff"/></svg>
  <svg class="on" viewBox="-25 -25 50 50"><rect x="-19.500" y="-19.500" width="39" height="39" rx="9" fill="#fff"/><path d="M5-15L14-11V11L5 15Z" fill="#3f9ee7"/><path d="M-14-5L-11-8L8 7V14ZM-14 5L-11 8L8-7V-14Z" fill="#246eb6"/></svg>
  <svg viewBox="-25 -25 50 50"><circle r="21" fill="#f6f5f3"/><path d="M0-14Q-13 1 0 14Z" fill="#59a84c"/><path d="M0-14Q13 1 0 14Z" fill="#3c8a3b"/></svg>
  <svg viewBox="-25 -25 50 50"><path d="M0-22L20-12V12L0 21L-20 12V-12Z" fill="#f5f0fc" stroke="#7f50c0" stroke-width="2.500"/><path d="M6-15L13-12V12L6 15Z" fill="#b593ea"/><path d="M-15-6L-12-8L7 7V15L-12-3L-12 3L7-7V-15L-15 6Z" fill="#6538a5"/></svg>
  <svg viewBox="-25 -25 50 50"><path d="M-14-16Q-9-22-5-17Q4-14 7-16Q8-26 16-23Q23-19 17-8Q11 1 19 8Q26 19 17 23Q11 26 3 15Q-4 8-12 14Q-21 18-24 10Q-24 5-14 0Q-10-3-14-16Z" fill="#ed7a2c"/><text y="7" class="t" font-size="25">a</text></svg>
  <svg class="on" viewBox="-25 -25 50 50"><rect x="-19.500" y="-19.500" width="39" height="39" rx="9" fill="#fff"/><use href="#edge" x="-15" y="-15" width="30" height="30"/><rect x="0" y="11" width="21" height="10" rx="2" fill="#a4e83b"/><text x="10.500" y="19" class="t dev" font-size="8.500">DEV</text></svg>
  <svg class="on" viewBox="-25 -25 50 50"><rect x="-19.500" y="-19.500" width="39" height="39" rx="9" fill="#f6f6f6"/><path d="M0 0L-13.900-8A16 16 0 0 1 13.900-8Z" fill="#d9453a"/><path d="M0 0L13.900-8A16 16 0 0 1 0 16Z" fill="#f4c93e"/><path d="M0 0L0 16A16 16 0 0 1-13.900-8Z" fill="#45a354"/><circle r="7.500" fill="#fff"/><circle r="5.800" fill="#3f78e0"/></svg>
  <svg viewBox="-25 -25 50 50"><circle r="21" fill="#3f9286"/><text y="6" class="t" font-size="17">QT</text></svg>
  <svg viewBox="-25 -25 50 50"><circle r="20" fill="url(#blue)" stroke="#dfe7f3" stroke-width="1.500"/><path d="M0-15L13 13L0 7L-13 13Z" fill="#e8effa"/><path d="M0-15V8L-4 10Z" fill="#b8c8e2"/></svg>
  <svg viewBox="-25 -25 50 50"><path d="M-19-17L11-20L19-13V17L-11 20L-19 12Z" fill="#111" stroke="#eee" stroke-width="1.500"/><path d="M-16-15L9-17L15-13L-9-11Z" fill="#eee"/><path d="M-10-9L17-11V15L-10 17Z" fill="#f2f1ef"/><text x="4" y="11" class="t serif" font-size="23">N</text></svg>
  <svg viewBox="-25 -25 50 50"><circle r="24" fill="#fff"/><path d="M-6-13H6V-3H-6zM-13-1H-5V5H5V-1H13V12H-13z" fill="#090909"/></svg>
  <svg viewBox="-25 -25 50 50"><rect x="-19.500" y="-19.500" width="39" height="39" rx="9" fill="#fff"/><path d="M-12-13Q2-8 0 13Q-14 4-12-13Z" fill="#7467bf"/><path d="M3-15Q13-4 0 14Q-11-1 3-15Z" fill="#55b2c2"/><path d="M14-6Q14 10 0 14Q0-1 14-6Z" fill="#f18474"/></svg>
  <svg viewBox="-25 -25 50 50"><path d="M-22-19H6V19H-22z" fill="#f9f9f9"/><path d="M9-2H21V18H9z" fill="#fff"/><text x="-8" y="13" class="t serif thin" font-size="35">R</text><text x="15" y="14" class="t small-r" font-size="17">r</text></svg>
  <svg viewBox="-25 -25 50 50"><rect x="-19.500" y="-19.500" width="39" height="39" rx="9" fill="#7b3ba2"/><circle r="16" fill="#f4eff7"/><path d="M-9-10L-4-7H4L9-10V-5Q14 5 4 7L5 16H-5V12Q-9 13-11 8L-5 9L-4 7Q-14 4-9-5Z" fill="#7b3ba2"/></svg>
  <svg viewBox="-25 -25 50 50"><rect x="-19.500" y="-19.500" width="39" height="39" rx="9" fill="#f4f4f4"/><path d="M-19.500-10Q-19-19-11-19.500H-7V19.500H-11Q-19 19-19.500 10Z" fill="#c7c8ca"/><path d="M-9-14H9L16-5L0 14L-16-5Z" fill="#f4a526"/><path d="M-9-14L0-15L9-14L8-5H-8Z" fill="#fbd14b"/><path d="M-8-5H8L0 14Z" fill="#f0b42d"/></svg>
  <svg viewBox="-25 -25 50 50"><path d="M-14-15H20L3 14Z" fill="url(#tri)"/><path d="M15-7L3 14L-3 4Z" fill="#1b29ef"/><path d="M-12-5L-3 8H-20Z" fill="#4fc1cc"/></svg>
  <svg viewBox="-25 -25 50 50"><rect x="-21" y="-21" width="42" height="42" rx="4" fill="#19181b"/><g><path d="M-16 7h7v4h-7z" fill="#e9ad46"/><path d="M-7.500-5h7v4h-7zM-7.500 7h7v4h-7z" fill="#e49a45"/><path d="M-7.500 1h7v4h-7z" fill="#dd7a4c"/><path d="M1 1h7v4H1z" fill="#c33e76"/><path d="M1 7h7v4H1z" fill="#8a3b8f"/><path d="M9.500-11h7v4h-7zM9.500-5h7v4h-7z" fill="#4cae70"/><path d="M9.500 1h7v4h-7z" fill="#3d8fb0"/><path d="M9.500 7h7v4h-7z" fill="#3266b9"/></g></svg>
  <svg class="on" viewBox="-25 -25 50 50"><path d="M-22 0L-15-8L0 8L-5 18Z" fill="#2553b1"/><path d="M14-18L22-10L-5 18L-12 9Z" fill="url(#todo)"/></svg>
  <i class="sep"></i>
  <svg viewBox="-25 -25 50 50"><rect x="-18" y="-18" width="36" height="36" rx="8" fill="#152522" stroke="#a6adaf" stroke-width="2"/><rect x="-15.500" y="-15.500" width="31" height="31" rx="5" fill="none" stroke="#000" stroke-width="2"/><path d="M-14 2H-9L-7-12L-5 8L-2 0L1 4L5-2L8 3L14 3" stroke="#62b69c" stroke-width="1.400" fill="none"/></svg>
  <svg viewBox="-25 -25 50 50"><g transform="rotate(-9)"><path d="M-17-19H17V20H-17z" fill="#edebe8"/><path d="M-17-19H17V-10H-17z" fill="#f0b836"/><path d="M-8-23H8V-17H-8z" fill="#68707a"/><path d="M-13 3L-7-6L-2 1L4-7L11-1" stroke="#8275d2" fill="none" stroke-width="1.500"/><path d="M-13 10L-6 3L0 7L8-2" stroke="#7fc16c" fill="none" stroke-width="1.500"/><path d="M-13 13L-4 9L3 12" stroke="#ea7b43" fill="none" stroke-width="1.500"/></g><path d="M9 2L15 11H3Z" fill="#eee" stroke="#888"/></svg>
  <svg viewBox="-25 -25 50 50"><circle r="23" fill="#60e3d1" stroke="#06110f"/><g fill="none" stroke="#0b2422" stroke-width="2"><path d="M0-23V23M-15-18Q-5-15-6-6M5-13h11M5-5h11M4 2h13v8H4zM-21-1Q-12-13-7-1V12Q-12 20-19 11M-13-5V9M5-20Q9-15 15-18M4 16Q10 12 18 14"/></g></svg>
  <i class="sep"></i>
  <svg viewBox="-25 -25 50 50"><path d="M-20-18H-13V-23H4L8-18H20V22H-20z" fill="#f7f7f7"/><path d="M-15-6L0-16L5-12L-7-2V17L-15 14Z" fill="#6cb5b3"/><path d="M-14-10L-2-16L2-14L-14-3Z" fill="#e7cc57"/><path d="M-8-3L13-12V11L-8 18Z" fill="#b8333a"/><path d="M-3 5L9-4M1 9L10 3" stroke="#edbc42" stroke-width="2.500" stroke-dasharray="3 2"/></svg>
  <svg viewBox="-25 -25 50 50"><path d="M-17-18L-12 17Q-11 21-5 21H5Q11 21 12 17L17-18Z" fill="#5c6065"/><ellipse cy="-18" rx="17" ry="3" fill="#35383b" stroke="#84888c" stroke-width="1.500"/><path d="M-10-12L-7 15M0-12V17M10-12L7 15" stroke="#6d7176" stroke-width="2" opacity=".5"/></svg>
</nav>
</body>
</html>
```
FILE: styles.css
```css
* { box-sizing: border-box; }
html, body { margin: 0; height: 1800px; overflow: hidden; }
body { width: 2880px; display: flex; flex-direction: column; background: linear-gradient(90deg, #000 0, #000 30%, #03051a 75%, #020616 100%) 0 0 / 100% 70px no-repeat, linear-gradient(90deg, #000 0, #000 40%, #03131c 62%, #020a10 80%, #000 95%) 0 1700px / 100% 100px no-repeat, #000; font-family: Inter, "Liberation Sans", sans-serif; }
svg { display: block; flex: none; }
.defs { position: absolute; }

.menubar { height: 50px; flex: none; padding: 0 0 0 35px; display: grid; align-items: center; color: #e8e8e8; font-size: 26px; white-space: nowrap; grid-template-columns: 80px 141px 133px 112px 81px 141px 149px 153px 137px 141px 119px 79px 75px 70px 68px 68px 66px 72px 76px 64px 86px 68px 64px 68px 72px 62px 68px 185px 110px; }
.menubar span { line-height: 46px; padding-bottom: 3px; letter-spacing: -.15px; }
.menubar .app { font-weight: 700; letter-spacing: -.3px; }
.menubar .pct { font-size: 24px; letter-spacing: -1.100px; }
.menubar .date { letter-spacing: -.3px; }
.menubar .clock { letter-spacing: 1px; }
.ico { width: 44px; height: 50px; }
.batt { width: 56px; }
.line { fill: none; stroke: #e6e6e6; stroke-width: 2.200; }
.dim { stroke: #47484d; }
.faint { stroke: #66676e; }
.iso { font-size: 11px; fill: #c23531; text-anchor: middle; }

.window { width: 2880px; height: 1668px; flex: none; border-radius: 22px; overflow: hidden; background: #fff; display: flex; flex-direction: column; }
.tabstrip { height: 84px; flex: none; background: #202124; border-top: 2px solid #6a6b6d; border-left: 2px solid #4f5053; border-radius: 22px 22px 0 0; display: flex; align-items: flex-end; }
.lights { width: 185px; height: 82px; display: flex; gap: 16px; padding: 29px 0 0 40px; }
.lights i { width: 24px; height: 24px; border-radius: 50%; }
.l-red { background: #ed6a5e; }
.l-yellow { background: #f4bd50; }
.l-green { background: #61c454; }
.tab { width: 222.200px; height: 68px; padding-left: 23px; display: flex; align-items: center; color: #bdc1c6; font-size: 24px; position: relative; }
.tab::after { content: ""; position: absolute; right: 0; top: 15px; width: 2px; height: 40px; background: #505155; }
.tab.active { width: 225px; background: #35363a; color: #fff; border-radius: 16px 16px 0 0; }
.tab.active::before, .tab.active::after { content: ""; position: absolute; top: auto; bottom: 0; width: 16px; height: 16px; background: radial-gradient(circle at 0 0, transparent 15.500px, #35363a 16px); }
.tab.active::before { left: -16px; }
.tab.active::after { right: -16px; background: radial-gradient(circle at 100% 0, transparent 15.500px, #35363a 16px); }
.tab.nosep { width: 223.500px; padding-left: 22px; }
.fav { width: 32px; height: 32px; }
.tab span { width: 97px; margin-left: 16px; overflow: hidden; white-space: nowrap; letter-spacing: -.1px; line-height: 34px; -webkit-mask-image: linear-gradient(90deg, #000 65%, transparent 100%); mask-image: linear-gradient(90deg, #000 65%, transparent 100%); }
.x { width: 18px; height: 18px; margin-left: 16px; }
.plus { width: 24px; height: 24px; margin: 0 0 22px 33px; }
.more { width: 28px; height: 28px; margin: 0 0 20px 130px; }

.toolbar { height: 74px; flex: none; background: #35363a; border-left: 2px solid #5a5b5e; border-bottom: 2px solid #282828; display: flex; align-items: center; padding-left: 10px; }
.nav { width: 64px; height: 64px; }
.omnibox { width: 2384px; height: 56px; margin-left: 12px; border-radius: 28px; background: #202124; display: flex; align-items: center; padding-left: 22px; font-size: 27px; color: #fff; white-space: nowrap; }
.info { width: 28px; height: 28px; }
.scheme { width: 115px; height: 32px; line-height: 32px; margin-left: 19px; color: #e8eaed; border-right: 2px solid #55575b; }
.url { margin-left: 18px; letter-spacing: .29px; }
.profile { width: 182px; height: 55px; margin-left: 18px; border: 2px solid #434347; border-radius: 28px; background: #292a2e; display: flex; align-items: center; padding-left: 2px; color: #fff; font-size: 26px; }
.profile svg { width: 44px; height: 44px; }
.profile span { margin-left: 16px; }
.kebab { width: 8px; height: 28px; margin-left: 32px; }

.viewport { height: 1510px; display: flex; position: relative; overflow: hidden; }
.page { width: 2850px; font-family: "Liberation Mono", "Courier New", monospace; color: #666; }
.page h1, .page h2 { margin: 0; font-weight: 700; }
.page h1 { font-size: 40px; line-height: 44px; text-align: center; }
.page h2 { font-size: 36px; line-height: 40px; }
.banner { height: 220px; background: #333; box-shadow: inset 2px 0 #5a5a5a; color: #fff; display: grid; }
.logos, .banner-text { grid-area: 1 / 1; }
.logos { width: 343px; height: 102px; margin-top: 39px; }
.banner-text { padding-top: 80px; text-align: center; display: flex; flex-direction: column; gap: 39px; }
.page .title { margin-top: 30px; }
.columns { margin-top: 59px; padding-left: 50px; display: grid; grid-template-columns: 876px 878px 877px; gap: 60px 60px; column-gap: 59.500px; }
.col h2 { margin-bottom: 19px; }
.col .maps { margin-top: 69px; }
.field { display: flex; flex-direction: column; margin-bottom: 30px; font-size: 20px; line-height: 30px; }
.field.tight { margin-bottom: 0; }
.field:has(+ .maps) { margin-bottom: 0; }
.field label { font-weight: 700; margin-bottom: 10px; }
.field small { font-size: 20px; }
.field input { width: 100%; height: 68px; border: 2px solid #ccc; border-radius: 8px; padding: 1px 24px 0; font: 28px "Liberation Mono", "Courier New", monospace; color: #555; background: #fff; box-shadow: inset 0 2px 3px rgba(0, 0, 0, .1); outline: none; }
.radio { display: flex; gap: 13px; padding-top: 8px; }
.radio i { width: 26px; height: 26px; border: 2px solid #767676; border-radius: 50%; background: #fff; }
.radio b { padding-top: 7px; }
table { width: 876px; table-layout: fixed; border-collapse: collapse; border: 2px solid #000; font-size: 20px; line-height: 30px; }
.c1 { width: 193px; } .c2 { width: 218px; } .c3 { width: 134px; } .c4 { width: 144px; } .c5 { width: 86px; } .c6 { width: 101px; }
th, td { padding: 0; white-space: nowrap; }
th { text-align: left; border-bottom: 2px solid #000; height: 32px; }
td { text-align: center; vertical-align: middle; height: 121px; }
.scroll { width: 30px; background: #fafafa; border-left: 2px solid #e8e8e8; padding: 7px 0 0 6px; }
.scroll i { display: block; width: 16px; height: 788px; border-radius: 8px; background: #c1c1c1; }
.shade { position: absolute; left: 0; right: 0; bottom: 0; height: 80px; background: linear-gradient(rgba(0, 0, 0, 0), rgba(0, 0, 0, .04) 50%, rgba(0, 0, 0, .12)); -webkit-mask-image: linear-gradient(90deg, transparent 0, #000 100px, #000 2750px, transparent 2880px); mask-image: linear-gradient(90deg, transparent 0, #000 100px, #000 2750px, transparent 2880px); }

.dock { width: 2811px; height: 70px; margin: 2px 0 0 35px; flex: none; border: 2px solid #37393b; border-radius: 20px; background: linear-gradient(90deg, #111214, #10161a 60%, #111214); display: flex; padding: 5px 0 0 3.500px; }
.dock svg { width: 50px; height: 50px; margin-right: 1.010px; overflow: visible; }
.dock .on { background: radial-gradient(circle at 25px 56px, #94969b 2.800px, transparent 3.400px); height: 60px; padding-bottom: 10px; }
.t { font-family: Inter, "Liberation Sans", sans-serif; font-weight: 600; fill: #fff; text-anchor: middle; }
.day { fill: #222; font-weight: 300; }
.quote { fill: #ef9d38; }
.dev { fill: #142000; }
.small-r { fill: #222; font-weight: 400; }
.serif { font-family: "Liberation Serif", serif; fill: #161616; }
.thin { font-weight: 400; }
.sep { width: 2px; height: 50px; background: #4d4f51; margin: 3px 11px 0 10px; }
```
